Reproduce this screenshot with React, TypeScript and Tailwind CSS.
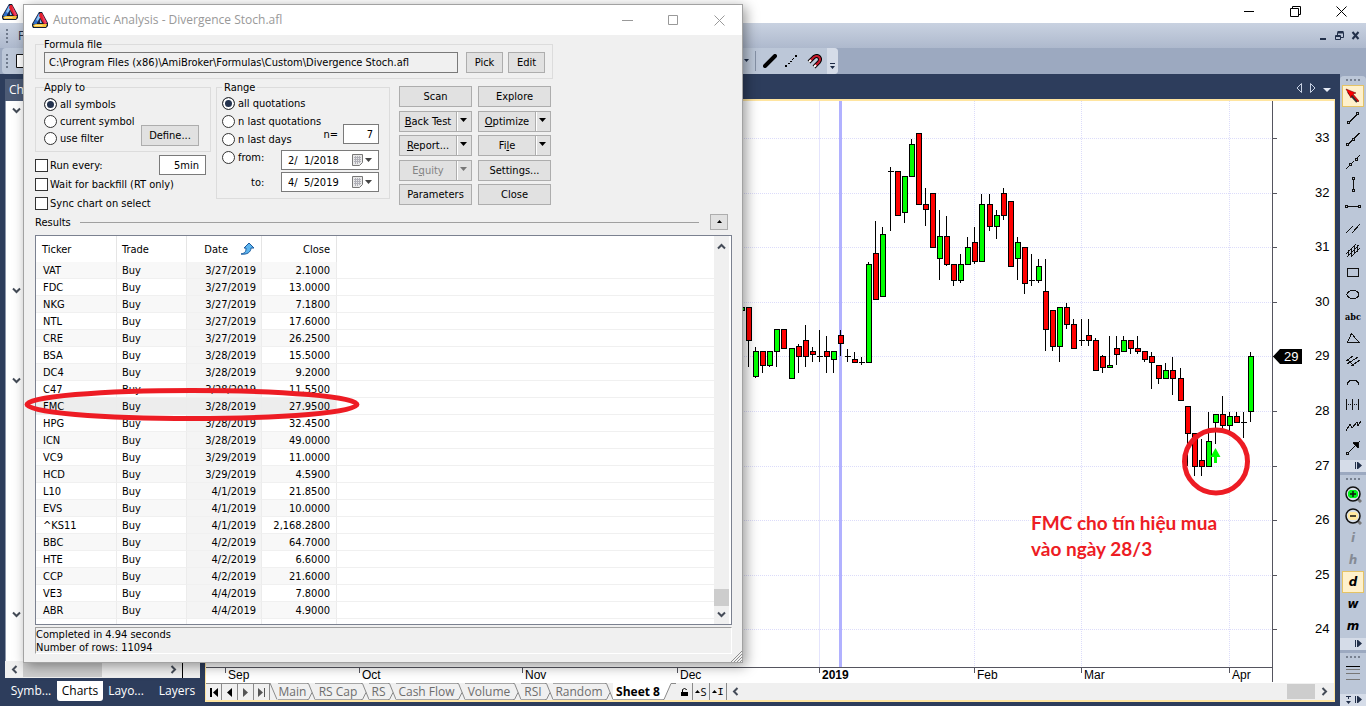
import React from "react";

const dialogFont = "font-['DejaVu_Sans_Condensed','Noto_Sans',sans-serif]";
const uiFont = "font-['Open_Sans','Noto_Sans',sans-serif]";
const buttonFace = "flex items-center justify-center border border-[#adadad] bg-[#e1e1e1] whitespace-nowrap";
const pushButton = `${buttonFace} h-[21px]`;

type Candle = [x: number, high: number, top: number, bottom: number, low: number, kind: "u" | "d"];

const candles: Candle[] = [
  [739, 307, 307, 311, 311, "u"],
  [746, 307, 307, 341, 367, "d"],
  [753, 347, 351, 377, 378, "u"],
  [760, 351, 351, 366, 373, "d"],
  [767, 351, 351, 366, 367, "u"],
  [774, 329, 329, 352, 367, "u"],
  [781, 329, 329, 349, 349, "d"],
  [789, 348, 348, 379, 379, "u"],
  [796, 344, 346, 357, 373, "d"],
  [803, 325, 340, 357, 367, "d"],
  [810, 347, 351, 355, 362, "d"],
  [817, 330, 356, 357, 362, "d"],
  [824, 336, 351, 357, 373, "d"],
  [831, 351, 351, 360, 373, "u"],
  [838, 330, 335, 344, 356, "d"],
  [845, 349, 356, 357, 362, "d"],
  [852, 352, 359, 363, 363, "d"],
  [859, 357, 362, 363, 365, "d"],
  [866, 262, 264, 363, 363, "u"],
  [873, 221, 253, 300, 300, "d"],
  [880, 227, 234, 297, 297, "u"],
  [888, 167, 171, 172, 231, "d"],
  [895, 171, 171, 216, 216, "d"],
  [902, 176, 176, 213, 223, "u"],
  [909, 139, 144, 177, 177, "u"],
  [916, 133, 133, 205, 205, "d"],
  [923, 188, 204, 210, 226, "d"],
  [930, 193, 193, 248, 248, "d"],
  [937, 210, 236, 259, 280, "u"],
  [944, 216, 236, 265, 266, "d"],
  [951, 264, 264, 281, 286, "d"],
  [958, 254, 264, 281, 283, "u"],
  [965, 237, 247, 265, 265, "u"],
  [972, 227, 242, 262, 264, "d"],
  [979, 194, 204, 262, 262, "u"],
  [987, 194, 204, 227, 231, "d"],
  [994, 210, 215, 227, 239, "u"],
  [1001, 188, 193, 216, 220, "d"],
  [1008, 201, 201, 267, 267, "d"],
  [1015, 237, 242, 259, 280, "u"],
  [1022, 247, 247, 284, 294, "d"],
  [1029, 254, 280, 281, 286, "d"],
  [1036, 259, 266, 281, 283, "u"],
  [1043, 259, 291, 330, 351, "d"],
  [1050, 310, 310, 347, 351, "d"],
  [1057, 307, 307, 347, 362, "u"],
  [1064, 303, 307, 325, 329, "d"],
  [1071, 319, 324, 349, 349, "d"],
  [1079, 319, 340, 341, 346, "d"],
  [1086, 319, 335, 341, 346, "d"],
  [1093, 338, 340, 371, 371, "d"],
  [1100, 355, 356, 368, 373, "d"],
  [1107, 336, 365, 368, 368, "u"],
  [1114, 336, 348, 355, 365, "d"],
  [1121, 336, 340, 352, 352, "u"],
  [1128, 340, 340, 349, 354, "d"],
  [1135, 336, 348, 352, 354, "d"],
  [1142, 351, 351, 360, 362, "d"],
  [1149, 352, 356, 363, 389, "d"],
  [1156, 365, 365, 379, 384, "d"],
  [1163, 363, 370, 379, 379, "u"],
  [1170, 357, 370, 379, 395, "d"],
  [1178, 368, 378, 401, 401, "d"],
  [1185, 406, 406, 434, 466, "d"],
  [1192, 433, 433, 467, 476, "d"],
  [1199, 439, 460, 467, 476, "d"],
  [1206, 412, 441, 467, 467, "u"],
  [1213, 414, 414, 423, 444, "u"],
  [1220, 396, 414, 426, 430, "d"],
  [1227, 412, 416, 426, 431, "u"],
  [1234, 412, 416, 423, 423, "d"],
  [1241, 412, 422, 423, 438, "d"],
  [1248, 352, 356, 412, 422, "u"],
];

const priceLevels = [
  { label: "33", y: 138 },
  { label: "32", y: 193 },
  { label: "31", y: 247 },
  { label: "30", y: 302 },
  { label: "29", y: 356 },
  { label: "28", y: 411 },
  { label: "27", y: 466 },
  { label: "26", y: 520 },
  { label: "25", y: 575 },
  { label: "24", y: 629 },
];

const months = [
  { label: "Sep", x: 225 },
  { label: "Oct", x: 359 },
  { label: "Nov", x: 522 },
  { label: "Dec", x: 677 },
  { label: "2019", x: 819, bold: true },
  { label: "Feb", x: 974 },
  { label: "Mar", x: 1081 },
  { label: "Apr", x: 1229 },
];

const results = [
  ["VAT", "3/27/2019", "2.1000"],
  ["FDC", "3/27/2019", "13.0000"],
  ["NKG", "3/27/2019", "7.1800"],
  ["NTL", "3/27/2019", "17.6000"],
  ["CRE", "3/27/2019", "26.2500"],
  ["BSA", "3/28/2019", "15.5000"],
  ["DC4", "3/28/2019", "9.2000"],
  ["C47", "3/28/2019", "11.5500"],
  ["FMC", "3/28/2019", "27.9500"],
  ["HPG", "3/28/2019", "32.4500"],
  ["ICN", "3/28/2019", "49.0000"],
  ["VC9", "3/29/2019", "11.0000"],
  ["HCD", "3/29/2019", "4.5900"],
  ["L10", "4/1/2019", "21.8500"],
  ["EVS", "4/1/2019", "10.0000"],
  ["^KS11", "4/1/2019", "2,168.2800"],
  ["BBC", "4/2/2019", "64.7000"],
  ["HTE", "4/2/2019", "6.6000"],
  ["CCP", "4/2/2019", "21.6000"],
  ["VE3", "4/4/2019", "7.8000"],
  ["ABR", "4/4/2019", "4.9000"],
];

function AppIcon() {
  return (
    <svg width="16" height="16" viewBox="0 0 16 16" className="shrink-0" aria-hidden="true">
      <path d="M7 0h3l6 11v3l-2 2H1l-1-2v-2z" fill="#111c33" />
      <path d="M7 1L1 12l3 1 5-8z" fill="#2f6fc9" />
      <path d="M7 2L4 8l2 1 3-5z" fill="#8fc3f2" />
      <path d="M8 1h2l5 10-3 1-5-8z" fill="#e3202c" />
      <path d="M10 2l5 9-2 1-2-5z" fill="#f0406a" />
      <path d="M1 13l3-1h11l-1 3H2z" fill="#f5c13a" />
      <path d="M2 13h9l-1 1H3z" fill="#fbe79a" />
      <path d="M8 6l-3 5h5l-1-2H8z" fill="#1d2b52" />
      <path d="M8 7l2 4H8z" fill="#8fc3f2" />
    </svg>
  );
}

function Chevron({ dir }: { dir: "up" | "down" | "left" | "right" }) {
  const d = {
    up: "M1 6.5l3.5-3.5L8 6.5",
    down: "M1 2.5L4.500 6 8 2.500",
    left: "M6.500 1L3 4.500 6.500 8",
    right: "M2.500 1L6 4.500 2.500 8",
  }[dir];
  return (
    <svg width="9" height="9" viewBox="0 0 9 9" fill="none" stroke="#454c58" strokeWidth="2" aria-hidden="true">
      <path d={d} />
    </svg>
  );
}

function Grip() {
  return (
    <svg width="3" height="16" viewBox="0 0 3 16" className="shrink-0" fill="#6f7a8c" aria-hidden="true">
      {[1, 5, 9, 13].map((y) => (
        <rect key={y} x="0" y={y} width="2" height="2" />
      ))}
    </svg>
  );
}

function WindowChrome() {
  return (
    <>
      <header className="flex h-[23px] shrink-0 items-center justify-between bg-white pl-[2px]">
        <AppIcon />
        <div className="flex pr-[2px]">
          <button aria-label="Minimize" className="flex h-[22px] w-[46px] items-center justify-center">
            <svg width="11" height="11" stroke="#000" fill="none"><path d="M0 5.500h10" /></svg>
          </button>
          <button aria-label="Restore" className="flex h-[22px] w-[46px] items-center justify-center">
            <svg width="11" height="11" stroke="#000" fill="none"><path d="M.5 2.500h8v8h-8zM2.500 2.500v-2h8v8h-2" /></svg>
          </button>
          <button aria-label="Close" className="flex h-[22px] w-[46px] items-center justify-center">
            <svg width="11" height="11" stroke="#000" fill="none"><path d="M.5.5l10 10M10.500.5l-10 10" /></svg>
          </button>
        </div>
      </header>
      <nav className="flex h-[25px] shrink-0 items-center bg-linear-to-b from-[#c9d2e1] to-[#aeb9cd] pl-[6px] text-[#1e2c45]">
        <Grip />
        <a href="#file" className={`${uiFont} ml-[9px] text-[12px]`}>File</a>
        <div className="ml-auto flex items-center gap-[7px] pr-[6px]">
          <button aria-label="Minimize chart">
            <svg width="9" height="9"><path d="M1 7h6v2H1z" fill="#22304a" /></svg>
          </button>
          <button aria-label="Restore chart">
            <svg width="9" height="9" fill="none" stroke="#22304a"><path d="M.5 4.500h5v4h-5zM.5 5.500h5M2.500 4V1.500h6v5H6M2.500 2h6M2.500 .5h6" /></svg>
          </button>
          <button aria-label="Close chart">
            <svg width="9" height="9" fill="none" stroke="#22304a" strokeWidth="2"><path d="M1.500 1l6 7M7.500 1l-6 7" /></svg>
          </button>
        </div>
      </nav>
      <div className="flex h-[26px] shrink-0 items-stretch bg-[#9ca9c0] pl-[2px]">
        <div className="flex w-[836px] items-center rounded-sm bg-[#bcc7d8] pl-[4px]">
          <Grip />
          <button aria-label="New" className="ml-[7px]">
            <svg width="12" height="14" fill="#fff" stroke="#111"><path d="M.5.5h7l4 4v9H.5z" /></svg>
          </button>
          <div className="ml-auto flex h-full items-center">
            <svg width="7" height="4" className="mr-[5px]"><path d="M1 0h5L3.500 3z" fill="#1c2a44" /></svg>
            <span className="mr-[7px] h-[20px] w-px bg-[#8591a5]" />
            <button aria-label="Pen width" className="mr-[8px]">
              <svg width="14" height="14"><path d="M2 12L12 2" stroke="#000" strokeWidth="4" strokeLinecap="round" /></svg>
            </button>
            <button aria-label="Dotted line" className="mr-[10px]">
              <svg width="12" height="12" fill="#000">
                <path d="M0 10h2v2H0zM3 8h2v1H3zM5 6h2v1H5zM7 4h1v1H7zM10 0h2v2h-2zM8 3h1v1H8z" />
              </svg>
            </button>
            <button aria-label="Magnet" className="mr-[5px]">
              <svg width="15" height="15" fill="none">
                <path d="M2 8l5-5q3-2 5 0t0 5l-5 5" stroke="#000" strokeWidth="4" />
                <path d="M3 7l4-4q3-2 5 0t0 5l-4 4" stroke="#c9182b" strokeWidth="2" />
                <path d="M2 8l2-2M7 13l2-2" stroke="#fff" strokeWidth="2" />
              </svg>
            </button>
            <div className="flex h-full w-[11px] items-end justify-center rounded-r-sm bg-[#d5dce8] pb-[4px]">
              <svg width="5" height="7" fill="#1c2a44"><path d="M0 0h5v1H0zM0 3h5L2.500 6z" /></svg>
            </div>
          </div>
        </div>
      </div>
    </>
  );
}

function ChartTree() {
  return (
    <aside className="flex w-[205px] shrink-0 flex-col pl-[5px] pt-[5px]">
      <h2 className={`${uiFont} flex h-[22px] w-[195px] items-center bg-[#4d5b75] pl-[4px] text-[12px] text-white`}>
        Charts
      </h2>
      <div className="w-[195px] flex-1 border-l border-[#8e99ac] bg-white">
        <div className="flex flex-col pl-[6px] pt-[5px]">
          <span className="h-[180px]"><Chevron dir="down" /></span>
          <span className="h-[90px]"><Chevron dir="down" /></span>
          <span className="h-[234px]"><Chevron dir="down" /></span>
          <span><Chevron dir="down" /></span>
        </div>
      </div>
      <div className="flex h-[17px] w-[195px] shrink-0 items-center bg-[#f0f0f0]">
        <span className="flex w-[18px] justify-center"><Chevron dir="left" /></span>
        <span className="h-[15px] w-[79px] bg-[#cdcdcd]" />
        <span className="ml-auto mr-[4px]"><Chevron dir="right" /></span>
        <span className="mr-[17px] h-full w-px bg-black" />
      </div>
      <div className={`${uiFont} mt-[3px] flex h-[25px] shrink-0 items-start text-[12px] leading-[20px] text-white`}>
        <button className="w-[52px] text-center">Symb...</button>
        <button className="w-[46px] rounded-b-[3px] bg-white text-center text-black">Charts</button>
        <button className="w-[46px] text-center">Layo...</button>
        <button className="w-[56px] text-center">Layers</button>
      </div>
    </aside>
  );
}

function PriceChart() {
  return (
    <svg className="block w-full flex-1 bg-white" role="img" aria-label="FMC daily candlestick chart">
      <g transform="translate(-206 -101)" shapeRendering="crispEdges">
        {priceLevels.map((p) => (
          <g key={p.label}>
            <path d={`M206 ${p.y + 0.5}H1272`} stroke="#dcdcfa" strokeDasharray="1 1" />
            <path d={`M1272 ${p.y + 0.5}h5`} stroke="#55555f" />
          </g>
        ))}
        {[974, 1081, 1229].map((x) => (
          <path key={x} d={`M${x + 0.5} 101V667`} stroke="#dcdcfa" strokeDasharray="1 1" />
        ))}
        <path d="M819.500 101V667" stroke="#e4e4fd" />
        <rect x="839" y="101" width="3" height="566" fill="#b1b1ff" />
        {candles.map(([x, high, top, bottom, low, kind]) => (
          <g key={x}>
            <rect x={x + 2} y={high} width="1" height={low - high} fill="#000" />
            {bottom - top <= 1 ? (
              <rect x={x} y={top} width="6" height="1" fill="#000" />
            ) : (
              <rect
                x={x + 0.5}
                y={top + 0.5}
                width="5"
                height={bottom - top - 1}
                fill={kind === "u" ? "#00ff00" : "#ff0000"}
                stroke="#000"
              />
            )}
          </g>
        ))}
        <path d="M1272.500 101V682M206 667.500H1272" stroke="#55555f" />
        {months.map((m) => (
          <path key={m.label} d={`M${m.x + 0.5} 667v6`} stroke="#55555f" />
        ))}
      </g>
      <g transform="translate(-206 -101)" className="font-['Liberation_Sans',sans-serif]">
        {priceLevels.map((p) => (
          <text key={p.label} x="1315" y={p.y + 4} fontSize="13">{p.label}</text>
        ))}
        {months.map((m) => (
          <text key={m.label} x={m.x + 3} y="679" fontSize="12" fontWeight={m.bold ? 700 : 400}>
            {m.label}
          </text>
        ))}
        <path d="M1273 356.500l7-7.500h22v15h-22z" />
        <text x="1284" y="361" fontSize="13" fill="#fff">29</text>
        <path d="M1215.500 448l5 9h-3.500v6h-3v-6h-3.500z" fill="#00ff00" />
        <circle cx="1216" cy="461.500" r="31.500" fill="none" stroke="#ed1c24" strokeWidth="5" />
      </g>
      <g
        transform="translate(-206 -101)"
        fill="#ed1c24"
        fontSize="19"
        fontWeight="700"
        className="font-['Lato','Open_Sans',sans-serif]"
      >
        <text x="1031" y="530">FMC cho tín hiệu mua</text>
        <text x="1031" y="556">vào ngày 28/3</text>
      </g>
    </svg>
  );
}

const sheets = [
  { name: "Main", width: "w-[29px]" },
  { name: "RS Cap", width: "w-[46px]" },
  { name: "RS", width: "w-[19px]" },
  { name: "Cash Flow", width: "w-[61px]" },
  { name: "Volume", width: "w-[48px]" },
  { name: "RSI", width: "w-[24px]" },
  { name: "Random", width: "w-[52px]" },
];

function TabEdge({ first }: { first?: boolean }) {
  return (
    <svg width="8" height="17" className="shrink-0" fill="none" stroke="#8a8a8a">
      <path d={first ? "M0 0l7 16.500" : "M0 .5h1.500L8 16.500M0 16.500h1.500L5 9.500"} />
    </svg>
  );
}

function SheetBar() {
  const navs = [
    ["First sheet", "M4 3h2v9H4zM12 3v9L7 7.500z", "#000"],
    ["Previous sheet", "M10 3v9L5 7.500z", "#000"],
    ["Next sheet", "M5 3v9l5-4.500z", "#555"],
    ["Last sheet", "M4 3v9l5-4.500zM10 3h1v9h-1z", "#555"],
  ];
  return (
    <div className={`${uiFont} flex h-[17px] shrink-0 items-stretch bg-[#f0f0f0] text-[12px] leading-[14px] text-[#6d6d6d]`}>
      {navs.map(([label, d, fill]) => (
        <button key={label} aria-label={label} className="w-[16px] border-r border-t border-r-[#8a8a8a] border-t-[#8a8a8a]">
          <svg width="14" height="15"><path d={d} fill={fill} /></svg>
        </button>
      ))}
      {sheets.map((s, i) => (
        <React.Fragment key={s.name}>
          <TabEdge first={i === 0} />
          <button className={`${s.width} border-y border-[#a5a5a5] text-center whitespace-nowrap`}>{s.name}</button>
        </React.Fragment>
      ))}
      <TabEdge />
      <button className="w-[50px] border-b border-[#a5a5a5] bg-white pt-px text-center font-bold whitespace-nowrap text-black">
        Sheet 8
      </button>
      <svg width="13" height="17" className="shrink-0">
        <path d="M0 0h8L1 16.500H0z" fill="#fff" />
        <path d="M0 16.500h1L8 .5h6" fill="none" stroke="#8a8a8a" />
      </svg>
      <button aria-label="Lock" className="flex w-[17px] items-center justify-center border-r border-[#8a8a8a]">
        <svg width="9" height="10"><path d="M1 5h7v4H1z" /><path d="M2.500 5V2.500q2-2 4 0V3" fill="none" stroke="#000" /></svg>
      </button>
      <button className="flex w-[17px] items-center justify-center border-r border-[#8a8a8a] text-[11px] text-black">
        <svg width="5" height="4"><path d="M0 3h5L2.500 0z" /></svg>S
      </button>
      <button className="flex w-[17px] items-center justify-center border-r border-[#8a8a8a] font-['Liberation_Mono',monospace] text-[11px] text-black">
        <svg width="5" height="4"><path d="M0 3h5L2.500 0z" /></svg>I
      </button>
      <div className="flex flex-1 items-center">
        <span className="ml-[4px]"><Chevron dir="left" /></span>
        <span className="ml-auto h-[15px] w-[28px] bg-[#cdcdcd]" />
        <span className="ml-[5px] mr-[5px]"><Chevron dir="right" /></span>
      </div>
    </div>
  );
}

function ChartWindow() {
  return (
    <main className="flex min-w-0 flex-1 flex-col">
      <div className="flex h-[25px] shrink-0 items-center justify-end gap-[6px] pr-[4px] pt-[3px]">
        <button aria-label="Scroll tabs left">
          <svg width="8" height="11" fill="none" stroke="#c8d2e4"><path d="M6.500 .5v9L2 5z" /></svg>
        </button>
        <button aria-label="Scroll tabs right">
          <svg width="8" height="11" fill="none" stroke="#c8d2e4"><path d="M1.500 .5v9L6 5z" /></svg>
        </button>
        <button aria-label="Window list">
          <svg width="9" height="11"><path d="M0 5h8L4 9z" fill="#e6ebf5" /></svg>
        </button>
      </div>
      <div className="mb-[4px] mr-px flex min-h-0 flex-1 flex-col border-x border-y-2 border-[#ffe5a0] bg-white">
        <PriceChart />
        <SheetBar />
      </div>
    </main>
  );
}

const drawTools: [string, React.ReactNode][] = [
  ["Trend line", <path d="M5 11.500L11.500 5M2.500 11.500h2v2h-2zM11.500 2.500h2v2h-2z" />],
  ["Ray", <path d="M4 11.500L7 8.500M9 6.500L14.500 1M1.500 11.500h2v2h-2zM7.500 6.500h2v2h-2z" />],
  ["Extended line", <path d="M1 15l3-3M7 9l2-2M12 4l3-3M4.500 9.500h2v2h-2zM10.500 4.500h2v2h-2z" />],
  ["Vertical line", <path d="M8.500 4v9M7.500 1.500h2v2h-2zM7.500 13.500h2v2h-2z" />],
  ["Horizontal line", <path d="M3 8.500h10M.5 7.500h2v2h-2zM13.500 7.500h2v2h-2z" />],
  ["Parallel lines", <path d="M1 13L8 6M7 13L15 4" />],
  ["Channel", <path d="M1 12L11 2M2 15L14 3M6 15l9-9M3.500 8v6M6.500 6v8M9.500 4v8M12.500 3v7" />],
  ["Rectangle", <path d="M2.500 4.500h11v8h-11z" />],
  ["Ellipse", <ellipse cx="8" cy="8.500" rx="6" ry="4" />],
  ["Text", <text x="8" y="12" textAnchor="middle" fontSize="9" fontWeight="700" fill="#000" stroke="none" className="font-['DejaVu_Serif_Condensed','Liberation_Serif',serif]">abc</text>],
  ["Triangle", <path d="M6.500 3.500L14 12.500H2.500z" />],
  ["Pitchfork", <path d="M1 9l7-5M2 12L13 5M6 14l9-6M3 8l6 6" />],
  ["Arc", <path d="M2 11q1-5 6-5t6 5" />],
  ["Time zones", <path d="M1.500 3v11M7.500 3v11M13.500 3v11M3 8.500h1M5 8.500h1M9 8.500h1M11 8.500h1" />],
  ["Zig zag", <path d="M1 13l4-7 2 4 5-6 1 4 3-5" />],
  ["Arrow", <><path d="M4 12l7-7M1.500 12.500h2v2h-2z" /><path d="M14 2l-1 6-5-5z" fill="#000" /></>],
];

const toolButton = "flex w-[22px] shrink-0 items-center justify-center";

function ToolFooter() {
  return (
    <div className="mt-auto flex h-[12px] w-full items-center justify-end bg-[#d5dce8] pr-[4px]">
      <svg width="8" height="8" fill="#22304a"><path d="M1 0h1v7H1zM3 0h1l4 3.500L4 7H3z" /></svg>
    </div>
  );
}

function ToolGrip() {
  return (
    <svg width="14" height="2" className="my-[3px] shrink-0" fill="#77808f">
      <path d="M0 0h2v2H0zM4 0h2v2H4zM8 0h2v2H8zM12 0h2v2h-2z" />
    </svg>
  );
}

function Magnifier({ plus }: { plus?: boolean }) {
  return (
    <svg width="17" height="17" viewBox="0 0 17 17">
      <path d="M11 11l5 5" stroke="#777" strokeWidth="3" />
      <circle cx="8" cy="8" r="7" fill="#d8dfe9" stroke="#111" strokeWidth="1.500" />
      <path d="M5 4h6l2 2v4l-2 2H5l-2-2V6z" fill={plus ? "#00f018" : "#ffe8a0"} />
      <path d={plus ? "M5 8h6M8 5v6" : "M5 8h6"} stroke="#111" strokeWidth="1.500" />
    </svg>
  );
}

function DrawingTools() {
  return (
    <aside className="ml-[4px] flex w-[26px] shrink-0 flex-col gap-[3px] bg-[#9ca9c0]">
      <div className="mt-[2px] flex h-[396px] flex-col items-center rounded-t-sm bg-[#bcc7d8]">
        <ToolGrip />
        <button aria-label="Select" className={`${toolButton} mt-px h-[22px] border border-[#e5c365] bg-[#fff1cc]`}>
          <svg width="16" height="16">
            <path d="M3 4l9 10" stroke="#333" strokeWidth="2" />
            <path d="M1 1l10 4-3 1 6 7-1 1-6-7-1 3z" fill="#f00" stroke="#500" strokeWidth=".5" />
          </svg>
        </button>
        {drawTools.map(([label, art]) => (
          <button key={label} aria-label={label} className={`${toolButton} h-[22px]`}>
            <svg width="18" height="16" viewBox="-1 0 18 16" fill="none" stroke="#111" strokeWidth="1" shapeRendering="crispEdges">
              {art}
            </svg>
          </button>
        ))}
        <ToolFooter />
      </div>
      <div className="flex h-[175px] flex-col items-center bg-[#bcc7d8] font-['DejaVu_Sans',sans-serif] text-[12px] font-bold italic">
        <ToolGrip />
        <button aria-label="Zoom in" className={`${toolButton} h-[22px]`}><Magnifier plus /></button>
        <button aria-label="Zoom out" className={`${toolButton} h-[22px]`}><Magnifier /></button>
        <button className={`${toolButton} h-[22px] text-[#858b95]`}>i</button>
        <button className={`${toolButton} h-[22px] text-[#858b95]`}>h</button>
        <button className={`${toolButton} h-[22px] border border-[#e5c365] bg-[#fff1cc]`}>d</button>
        <button className={`${toolButton} h-[22px]`}>w</button>
        <button className={`${toolButton} h-[22px]`}>m</button>
        <ToolFooter />
      </div>
      <div className="flex flex-1 flex-col items-center bg-[#bcc7d8]">
        <ToolGrip />
        <svg width="14" height="16" className="mt-[4px]" shapeRendering="crispEdges">
          <path d="M0 1.500h14" stroke="#000" />
          <path d="M0 4.500h14M0 8.500h14M0 14.500h14" stroke="#777" />
        </svg>
        <div className="mt-auto flex h-[12px] w-full items-center justify-between bg-[#d5dce8] pl-[6px] pr-[4px]">
          <svg width="5" height="9" fill="#22304a"><path d="M0 0h5v1H3v2H2V1H0zM0 5h5L2.500 8z" /></svg>
          <svg width="8" height="8" fill="#22304a"><path d="M1 0h1v7H1zM3 0h1l4 3.500L4 7H3z" /></svg>
        </div>
      </div>
    </aside>
  );
}

function Radio({ name, label, checked }: { name: string; label: string; checked?: boolean }) {
  return (
    <label className="flex items-center gap-[3px] whitespace-nowrap">
      <input
        type="radio"
        name={name}
        defaultChecked={checked}
        className="h-[13px] w-[13px] shrink-0 appearance-none rounded-full border border-[#333] bg-white checked:bg-[#24334f] checked:shadow-[inset_0_0_0_2px_#fff]"
      />
      {label}
    </label>
  );
}

function Check({ label }: { label: string }) {
  return (
    <label className="flex items-center gap-[2px] whitespace-nowrap">
      <input type="checkbox" className="h-[13px] w-[13px] shrink-0 appearance-none border border-[#333] bg-white" />
      {label}
    </label>
  );
}

function SplitButton({ before = "", hot, after, disabled }: { before?: string; hot: string; after: string; disabled?: boolean }) {
  return (
    <div className={`${pushButton} w-[73px] ${disabled ? "text-[#838383]" : "text-black"}`}>
      <button disabled={disabled} className="h-full flex-1 text-center">
        {before}<u>{hot}</u>{after}
      </button>
      <button
        disabled={disabled}
        aria-label={`${before}${hot}${after} options`}
        className="flex h-full w-[15px] items-start justify-center border-l border-[#adadad] pt-[6px] shadow-[inset_1px_0_0_#fff]"
      >
        <svg width="8" height="4" fill={disabled ? "#777" : "#000"}><path d="M0 0h7L3.500 4z" /></svg>
      </button>
    </div>
  );
}

function DateField({ label, month, rest }: { label: string; month: string; rest: string }) {
  return (
    <div className="flex h-[20px] w-[98px] items-center border border-[#7a7a7a] bg-white pl-[6px]">
      <input aria-label={label} defaultValue={`${month}/  ${rest}`} className="w-[60px] bg-transparent whitespace-pre outline-none" />
      <svg width="11" height="12" className="ml-[4px] shrink-0">
        <path d="M.5.5h10v8l-3 3h-7z" fill="#e9e9e9" stroke="#777" />
        <path d="M2 3.500h7M2 5.500h7M2 7.500h7M3.500 2v8M5.500 2v8M7.500 2v7" stroke="#b0b0b8" />
      </svg>
      <svg width="7" height="4" className="ml-[2px] shrink-0"><path d="M0 0h7L3.500 4z" fill="#444" /></svg>
    </div>
  );
}

const cellLine = "border-b border-r border-b-[#f0f0f0] border-r-[#ececec]";

function ResultsTable() {
  return (
    <div className="flex min-h-0 flex-1 overflow-hidden border border-[#7b8190] bg-white">
      <table className="h-fit min-w-0 flex-1 table-fixed border-separate border-spacing-0 text-left">
        <colgroup>
          <col className="w-[81px]" />
          <col className="w-[70px]" />
          <col className="w-[75px]" />
          <col className="w-[75px]" />
          <col />
        </colgroup>
        <thead>
          <tr className="h-[26px]">
            <th className="border-r border-[#e5e5e5] p-0 pl-[6px] font-normal">Ticker</th>
            <th className="border-r border-[#e5e5e5] p-0 pl-[5px] font-normal">Trade</th>
            <th className="border-r border-[#e5e5e5] p-0 font-normal">
              <span className="flex items-center justify-end gap-[12px] pr-[6px]">
                Date
                <svg width="15" height="14" className="shrink-0">
                  <path d="M9 1l5 5h-3c0 4-4 7-10 6 4-1 5-2 5-6H4z" fill="#5cb4ee" stroke="#1c5b9e" />
                </svg>
              </span>
            </th>
            <th className="border-r border-[#e5e5e5] p-0 pr-[6px] text-right font-normal">Close</th>
            <th className="p-0" />
          </tr>
        </thead>
        <tbody className="leading-[15px]">
          {results.map(([ticker, date, close], i) => {
            const shade = ticker === "FMC" ? "bg-[#ededed]" : i % 2 === 0 ? "bg-[#f8f8f8]" : "";
            const dateShade = ticker === "FMC" ? "bg-[#ededed]" : "bg-[#f4f4f4]";
            return (
              <tr key={ticker}>
                <td className={`${cellLine} ${shade} p-0 pl-[7px] pt-px`}>{ticker}</td>
                <td className={`${cellLine} ${shade} p-0 pl-[5px] pt-px`}>Buy</td>
                <td className={`${cellLine} ${dateShade} p-0 pr-[5px] pt-px text-right`}>{date}</td>
                <td className={`${cellLine} ${shade} p-0 pr-[6px] pt-px text-right`}>{close}</td>
                <td className="border-b border-[#f0f0f0] p-0" />
              </tr>
            );
          })}
          <tr className="h-[5px]">
            <td className="border-r border-[#ececec] p-0" />
            <td className="border-r border-[#ececec] p-0" />
            <td className="border-r border-[#ececec] p-0" />
            <td className="border-r border-[#ececec] p-0" />
            <td className="p-0" />
          </tr>
        </tbody>
      </table>
      <div className="mr-[2px] flex w-[15px] flex-col items-center bg-[#f0f0f0]">
        <span className="pt-[6px]"><Chevron dir="up" /></span>
        <span className="mt-auto h-[17px] w-full bg-[#cdcdcd]" />
        <span className="pb-[5px] pt-[4px]"><Chevron dir="down" /></span>
      </div>
    </div>
  );
}

function AnalysisDialog() {
  const captionButton = "flex h-[29px] w-[46px] items-center justify-center";
  return (
    <section
      role="dialog"
      aria-label="Automatic Analysis"
      className={`${dialogFont} absolute left-[23px] top-[4px] flex h-[659px] w-[720px] flex-col border border-[#a2a2a2] bg-[#f0f0f0] text-[11px] leading-[13px] text-black shadow-[3px_3px_12px_rgba(0,0,0,0.4)]`}
    >
      <header className="flex h-[30px] shrink-0 items-center bg-white pl-[8px]">
        <AppIcon />
        <h1 className={`${uiFont} ml-[5px] text-[12px] leading-[16px] text-[#999]`}>
          Automatic Analysis - Divergence Stoch.afl
        </h1>
        <div className="ml-auto flex">
          <button aria-label="Minimize" className={captionButton}>
            <svg width="11" height="11" fill="none" stroke="#999"><path d="M0 5.500h11" /></svg>
          </button>
          <button aria-label="Maximize" className={captionButton}>
            <svg width="11" height="11" fill="none" stroke="#999"><path d="M.5.5h9v9H.5z" /></svg>
          </button>
          <button aria-label="Close" className={captionButton}>
            <svg width="11" height="11" fill="none" stroke="#999"><path d="M.5.5l10 10M10.500.5l-10 10" /></svg>
          </button>
        </div>
      </header>

      <div className="flex min-h-0 flex-1 flex-col pb-[8px] pl-[11px] pr-[10px] pt-[3px]">
        <fieldset className="h-[41px] w-[518px] border border-[#dcdcdc] pl-[8px]">
          <legend>Formula file</legend>
          <div className="flex items-center pt-px">
            <input
              aria-label="Formula file"
              readOnly
              defaultValue="C:\Program Files (x86)\AmiBroker\Formulas\Custom\Divergence Stoch.afl"
              className="h-[21px] w-[414px] border border-[#7a7a7a] bg-[#f0f0f0] px-[4px] outline-none"
            />
            <button className={`${pushButton} ml-[8px] w-[37px]`}>Pick</button>
            <button className={`${pushButton} ml-[5px] w-[37px]`}>Edit</button>
          </div>
        </fieldset>

        <div className="mt-[2px] flex h-[132px] shrink-0">
          <div className="flex w-[176px] flex-col">
            <fieldset className="h-[71px] border border-[#dcdcdc] pl-[8px] pr-[11px]">
              <legend>Apply to</legend>
              <div className="flex justify-between pt-[2px]">
                <div className="grid grid-rows-[17px_17px_17px]">
                  <Radio name="apply" label="all symbols" checked />
                  <Radio name="apply" label="current symbol" />
                  <Radio name="apply" label="use filter" />
                </div>
                <button className={`${pushButton} mb-px w-[58px] self-end`}>Define...</button>
              </div>
            </fieldset>
            <div className="mt-[3px] flex h-[20px] items-center justify-between pr-[5px]">
              <Check label="Run every:" />
              <input aria-label="Run interval" defaultValue="5min" className="h-[20px] w-[47px] border border-[#7a7a7a] bg-white pr-[6px] text-right outline-none" />
            </div>
            <div className="flex h-[18px] items-center"><Check label="Wait for backfill (RT only)" /></div>
            <div className="flex h-[20px] items-center"><Check label="Sync chart on select" /></div>
          </div>

          <fieldset className="ml-[5px] h-[118px] w-[174px] border border-[#dcdcdc] pl-[5px] pr-[10px]">
            <legend className="px-[2px]">Range</legend>
            <div className="flex justify-between">
              <div className="grid w-[58px] grid-rows-[18px_18px_18px_19px_30px]">
                <Radio name="range" label="all quotations" checked />
                <Radio name="range" label="n last quotations" />
                <Radio name="range" label="n last days" />
                <Radio name="range" label="from:" />
                <span className="self-center pl-[29px]">to:</span>
              </div>
              <div className="flex flex-col items-end pt-[30px]">
                <label className="flex h-[20px] items-center gap-[5px]">
                  n=
                  <input defaultValue="7" className="h-[20px] w-[36px] border border-[#7a7a7a] bg-white pr-[5px] text-right outline-none" />
                </label>
                <div className="mt-[6px] flex flex-col gap-[2px]">
                  <DateField label="From date" month="2" rest="1/2018" />
                  <DateField label="To date" month="4" rest="5/2019" />
                </div>
              </div>
            </div>
          </fieldset>

          <div className="ml-[9px] mt-[5px] grid h-[119px] grid-cols-[73px_73px] content-between gap-x-[6px]">
            <button className={pushButton}>Scan</button>
            <button className={pushButton}>Explore</button>
            <SplitButton hot="B" after="ack Test" />
            <SplitButton hot="O" after="ptimize" />
            <SplitButton hot="R" after="eport..." />
            <SplitButton before="Fi" hot="l" after="e" />
            <SplitButton before="E" hot="q" after="uity" disabled />
            <button className={pushButton}>Settings...</button>
            <button className={pushButton}>Parameters</button>
            <button className={pushButton}>Close</button>
          </div>
        </div>

        <div className="mb-[4px] flex h-[18px] shrink-0 items-center pr-[4px]">
          <h2>Results</h2>
          <span className="ml-[9px] h-px flex-1 bg-[#a0a0a0]" />
          <button aria-label="Collapse" className={`${buttonFace} ml-[11px] h-[16px] w-[18px]`}>
            <svg width="5" height="4"><path d="M0 3h5L2.500 0z" /></svg>
          </button>
        </div>

        <ResultsTable />

        <div className="mt-[2px] h-[27px] shrink-0 border border-b-white border-l-[#a0a0a0] border-r-white border-t-[#a0a0a0] leading-[13px]">
          <p>Completed in 4.94 seconds</p>
          <p>Number of rows: 11094</p>
        </div>
      </div>
      <svg width="11" height="11" className="absolute bottom-0 right-0" stroke="#8f8f8f">
        <path d="M0 11L11 0M3 11l8-8M6 11l5-5M9 11l2-2" />
      </svg>
    </section>
  );
}

export default function App() {
  return (
    <div className="relative flex h-screen flex-col overflow-hidden bg-[#2d3d5c]">
      <WindowChrome />
      <div className="flex min-h-0 flex-1">
        <ChartTree />
        <ChartWindow />
        <DrawingTools />
      </div>
      <AnalysisDialog />
      <svg width="338" height="36" className="pointer-events-none absolute left-[24px] top-[387px]" fill="none">
        <ellipse cx="168" cy="17.500" rx="165" ry="14" stroke="#ed1c24" strokeWidth="5" />
      </svg>
    </div>
  );
}
